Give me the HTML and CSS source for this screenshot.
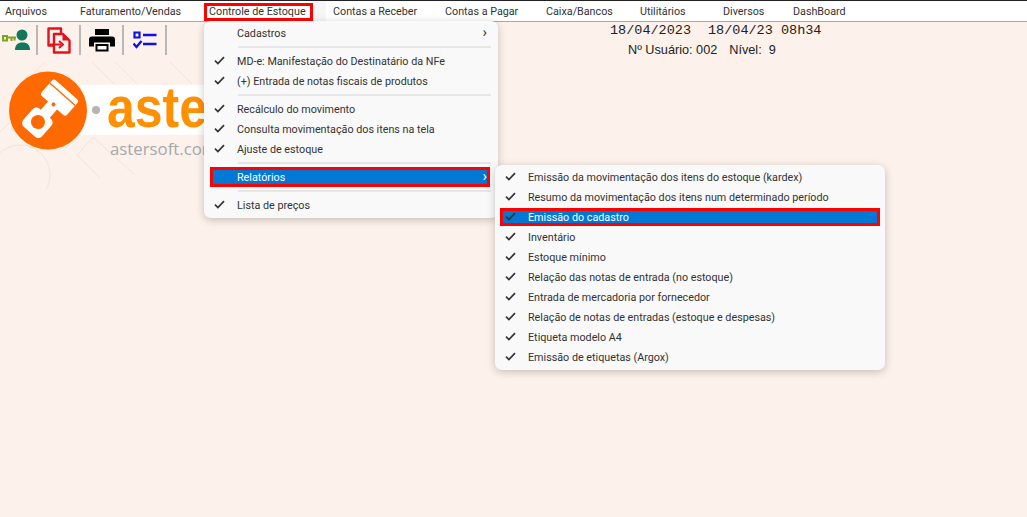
FILE: index.html
```html
<!DOCTYPE html>
<html lang="pt-BR">
<head>
<meta charset="utf-8">
<title>Asterbarra</title>
<link rel="stylesheet" href="styles.css">
</head>
<body>
<svg class="defs" width="0" height="0" aria-hidden="true">
  <symbol id="chk" viewBox="0 0 11 9"><path d="M1 4.600 3.900 7.500 10 1.200" fill="none" stroke="currentColor" stroke-width="1.700"/></symbol>
</svg>
<nav class="menubar">
  <span class="top t1">Arquivos</span>
  <span class="top t2">Faturamento/Vendas</span>
  <span class="top t3 boxed">Controle de Estoque</span>
  <span class="top t4">Contas a Receber</span>
  <span class="top t5">Contas a Pagar</span>
  <span class="top t6">Caixa/Bancos</span>
  <span class="top t7">Utilitários</span>
  <span class="top t8">Diversos</span>
  <span class="top t9">DashBoard</span>
</nav>
<div class="toolbar">
  <div class="tool">
    <svg width="30" height="22" viewBox="0 0 30 22">
      <circle cx="21" cy="6" r="5.500" fill="#12775f"/>
      <path d="M14 21c0-5 2.500-7.500 7.500-7.500S29 16 29 21z" fill="#12775f"/>
      <path d="M2 7h4v4.500H2z" fill="none" stroke="#7da81e" stroke-width="2"/>
      <path d="M7 8.500h8M10.500 9v3M13.500 9v2.500" fill="none" stroke="#7da81e" stroke-width="2"/>
    </svg>
  </div>
  <div class="tool">
    <svg width="24" height="27" viewBox="0 0 24 27" stroke-linejoin="round">
      <path d="M14 6V1.500H1.500V18.500H6" fill="none" stroke="#e4121d" stroke-width="2.400"/>
      <path d="M7 7h9l6.500 6.500V25.500H7z" fill="none" stroke="#e4121d" stroke-width="2.400"/>
      <path d="M15.500 6.500 22.500 13.500h-7z" fill="#e4121d"/>
      <path d="M3 17.500h11" stroke="#e4121d" stroke-width="2"/>
      <path d="M12 14 16 17.500l-4 3.500" fill="none" stroke="#e4121d" stroke-width="2"/>
    </svg>
  </div>
  <div class="tool">
    <svg width="26" height="23" viewBox="0 0 26 23">
      <path d="M6 0h14v6H6z" fill="#000"/>
      <path d="M3 7.500h20q3 0 3 3v7h-5v-4H5v4H0v-7q0-3 3-3z" fill="#000"/>
      <path d="M6.500 15h13v7.500h-13z" fill="#000"/>
      <path d="M8.500 17h9v3.500h-9z" fill="#fff"/>
    </svg>
  </div>
  <div class="tool">
    <svg width="24" height="18" viewBox="0 0 24 18">
      <path d="M1.500 1.500h5v5h-5z" fill="none" stroke="#1010e0" stroke-width="2.200"/>
      <path d="M10 4h13.500M10 13h13.500" stroke="#1010e0" stroke-width="2.400"/>
      <path d="M.5 12.500 3.500 16 8.500 10" fill="none" stroke="#1010e0" stroke-width="2.400"/>
    </svg>
  </div>
  <div class="status">
    <div class="date"><span>18/04/2023</span><span>18/04/23 08h34</span></div>
    <div class="user"><span>Nº Usuário: 002</span><span>Nível:&nbsp; 9</span></div>
  </div>
</div>
<main class="desk">
  <svg class="pattern" width="204" height="130" viewBox="0 0 204 130">
    <g fill="none" stroke="#f3e3db" stroke-width="1">
      <path d="M92 2 115 25M115 2 137 24M170 2 192 24M45 2 20 27M10 62 0 72M77 95 93 77 135 115M77 95 100 118"/>
      <circle cx="20" cy="115" r="30"/>
    </g>
  </svg>
  <div class="logo">
    <svg class="mark" width="80" height="80" viewBox="0 0 80 80">
      <circle cx="39" cy="39.500" r="39" fill="#ff6a00"/>
      <g transform="translate(29 51) rotate(41.500)">
        <rect x="-12.500" y="-11" width="25" height="24" rx="5" fill="#fff"/>
        <rect x="-6" y="-24" width="12" height="15" fill="#fff"/>
        <rect x="-17" y="-43" width="34" height="21" rx="3" fill="#fff"/>
        <path d="M-17-37h34" stroke="#ff6a00" stroke-width="1.400"/>
        <circle cy="-23.500" r="2" fill="#ff6a00"/>
        <circle r="7" fill="#ff6a00"/>
      </g>
    </svg>
    <span class="dot"></span>
    <div class="band"><span class="brand">aster</span></div>
    <span class="url">astersoft.com</span>
  </div>
</main>

<div class="menu main-menu">
  <div class="row"><span class="label">Cadastros</span><span class="arrow">›</span></div>
  <div class="sep"></div>
  <div class="row"><svg class="chk"><use href="#chk"/></svg><span class="label">MD-e: Manifestação do Destinatário da NFe</span></div>
  <div class="row"><svg class="chk"><use href="#chk"/></svg><span class="label">(+) Entrada de notas fiscais de produtos</span></div>
  <div class="sep"></div>
  <div class="row"><svg class="chk"><use href="#chk"/></svg><span class="label">Recálculo do movimento</span></div>
  <div class="row"><svg class="chk"><use href="#chk"/></svg><span class="label">Consulta movimentação dos itens na tela</span></div>
  <div class="row"><svg class="chk"><use href="#chk"/></svg><span class="label">Ajuste de estoque</span></div>
  <div class="sep"></div>
  <div class="row active"><span class="label">Relatórios</span><span class="arrow">›</span></div>
  <div class="sep"></div>
  <div class="row"><svg class="chk"><use href="#chk"/></svg><span class="label">Lista de preços</span></div>
</div>

<div class="menu sub-menu">
  <div class="row"><svg class="chk"><use href="#chk"/></svg><span class="label">Emissão da movimentação dos itens do estoque (kardex)</span></div>
  <div class="row"><svg class="chk"><use href="#chk"/></svg><span class="label">Resumo da movimentação dos itens num determinado período</span></div>
  <div class="row active"><svg class="chk"><use href="#chk"/></svg><span class="label">Emissão do cadastro</span></div>
  <div class="row"><svg class="chk"><use href="#chk"/></svg><span class="label">Inventário</span></div>
  <div class="row"><svg class="chk"><use href="#chk"/></svg><span class="label">Estoque mínimo</span></div>
  <div class="row"><svg class="chk"><use href="#chk"/></svg><span class="label">Relação das notas de entrada (no estoque)</span></div>
  <div class="row"><svg class="chk"><use href="#chk"/></svg><span class="label">Entrada de mercadoria por fornecedor</span></div>
  <div class="row"><svg class="chk"><use href="#chk"/></svg><span class="label">Relação de notas de entradas (estoque e despesas)</span></div>
  <div class="row"><svg class="chk"><use href="#chk"/></svg><span class="label">Etiqueta modelo A4</span></div>
  <div class="row"><svg class="chk"><use href="#chk"/></svg><span class="label">Emissão de etiquetas (Argox)</span></div>
</div>
</body>
</html>
```
FILE: styles.css
```css
*, *::before, *::after { box-sizing: border-box; }
html, body { margin: 0; height: 100%; overflow: hidden; }
body {
  position: relative;
  background: #fdf1eb;
  font-family: Roboto, "Noto Sans", sans-serif;
  font-size: 10.750px;
  color: #333;
}
.defs { position: absolute; }

.menubar {
  height: 22px;
  display: flex;
  background: #fff;
  border-top: 1px solid #222;
  border-bottom: 1px solid #a8a8a8;
}
.top { white-space: nowrap; flex: none; height: 20px; line-height: 22px; }
.t1 { width: 75px; margin-left: 5px; }
.t2 { width: 129px; }
.t3 { width: 124px; }
.t4 { width: 112px; }
.t5 { width: 101px; }
.t6 { width: 94px; }
.t7 { width: 83px; }
.t8 { width: 70px; }
.boxed { position: relative; }
.boxed::before {
  content: "";
  position: absolute;
  left: -5px;
  top: 2px;
  width: 109px;
  height: 18px;
  border: 3px solid #f00;
}
.boxed::after {
  content: "";
  position: absolute;
  left: 104px;
  top: 0;
  width: 13px;
  height: 20px;
  background: #f6f6f6;
}

.toolbar {
  display: flex;
  height: 36px;
  padding-top: 3px;
}
.tool {
  flex: none;
  width: 43px;
  height: 30px;
  display: flex;
  align-items: center;
  justify-content: center;
  border-right: 2px solid #b8b8b8;
}
.tool:first-child { width: 38px; justify-content: flex-start; padding-left: 1px; }
.status {
  margin-left: 443px;
  color: #222;
}
.date {
  display: flex;
  gap: 17px;
  font-family: "Liberation Mono", monospace;
  font-size: 13.500px;
  line-height: 16px;
  margin-top: -2px;
}
.user {
  display: flex;
  gap: 12px;
  margin: 4px 0 0 18px;
  font-family: "Liberation Sans", sans-serif;
  font-size: 12.700px;
  line-height: 15px;
}

.desk { position: relative; height: 459px; }
.pattern { position: absolute; left: 0; top: 2px; z-index: -2; }
.logo { position: relative; height: 110px; }
.mark { position: absolute; left: 9px; top: 13px; }
.dot {
  position: absolute;
  left: 92px;
  top: 48px;
  width: 8px;
  height: 8px;
  border-radius: 50%;
  background: #b4b4b4;
  z-index: 1;
}
.band {
  position: absolute;
  left: 80px;
  top: 27px;
  width: 200px;
  height: 50px;
  padding-left: 27px;
  background: #fff;
  z-index: -1;
}
.brand {
  display: inline-block;
  font-family: "Liberation Sans", sans-serif;
  font-weight: 700;
  font-size: 50px;
  line-height: 50px;
  color: #ff9000;
  transform: scaleY(1.140);
  transform-origin: 0 83%;
}
.url {
  position: absolute;
  left: 110px;
  top: 80px;
  font-family: "Open Sans", sans-serif;
  font-size: 16.800px;
  line-height: 22px;
  color: #a8a8a8;
}

.menu {
  position: absolute;
  background: #f9f9f9;
  border-radius: 7px;
  box-shadow: 0 2px 8px rgba(0, 0, 0, .22);
  padding-top: 2px;
  z-index: 2;
}
.main-menu { left: 204px; top: 21px; width: 294px; height: 197px; }
.sub-menu { left: 495px; top: 165px; width: 390px; height: 205px; z-index: 3; }
.row {
  position: relative;
  height: 20px;
  display: flex;
  align-items: center;
  white-space: nowrap;
}
.label { position: absolute; left: 33px; }
.chk { position: absolute; left: 10px; top: 5px; width: 11px; height: 9px; color: #333; }
.arrow {
  position: absolute;
  right: 11px;
  font-size: 15px;
  line-height: 20px;
  top: -1px;
}
.sep { height: 8px; position: relative; }
.sep::before {
  content: "";
  position: absolute;
  left: 34px;
  right: 7px;
  top: 3px;
  height: 2px;
  background: #e6e6e6;
}
.row.active { color: #fff; }
.row.active .chk { color: #333; }
.row.active::before {
  content: "";
  position: absolute;
  left: 9px;
  right: 11px;
  top: 3px;
  height: 14px;
  background: #0078d4;
}
.row.active::after {
  content: "";
  position: absolute;
  left: 6px;
  right: 8px;
  top: 0;
  height: 20px;
  border: 3px solid #f00;
}
.row.active .label, .row.active .chk, .row.active .arrow { z-index: 1; }
.sub-menu .row.active::before { left: 8px; right: 8px; top: 3px; height: 14px; }
.sub-menu .row.active::after { left: 5px; right: 5px; top: 1px; height: 18px; }
```
